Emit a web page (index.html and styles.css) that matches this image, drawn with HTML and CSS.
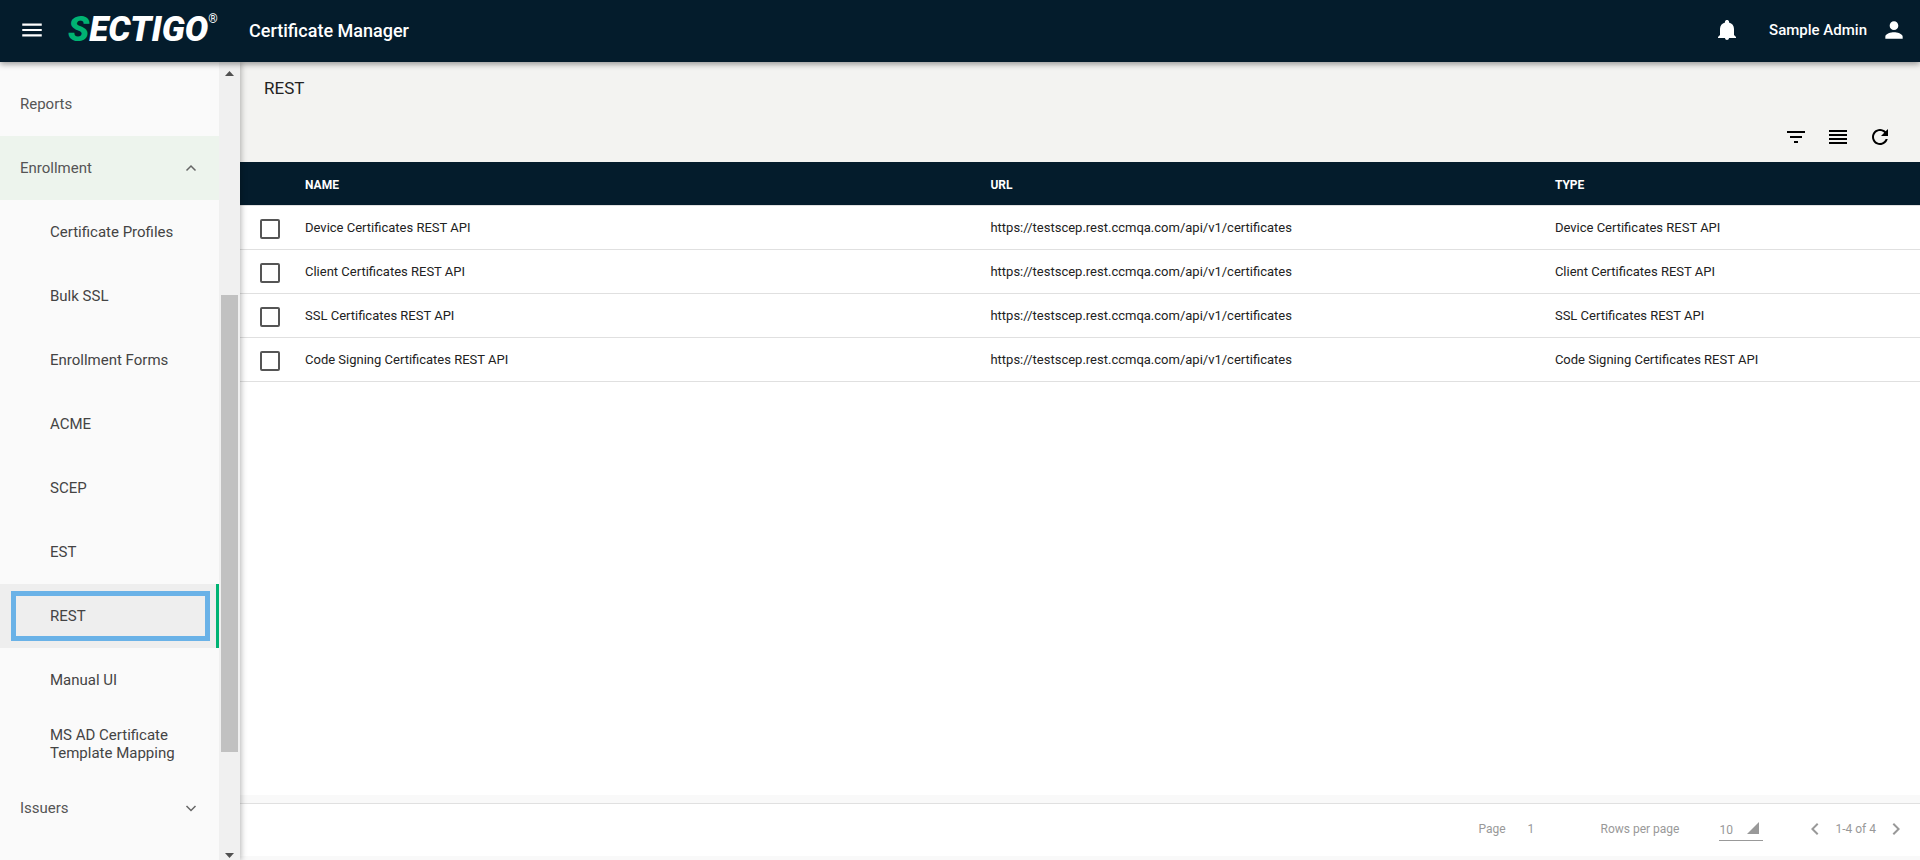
FILE: index.html
```html
<!DOCTYPE html>
<html lang="en">
<head>
    <meta charset="UTF-8">
    <meta name="viewport" content="width=device-width, initial-scale=1.0">
    <title>Certificate Manager</title>
    <link rel="stylesheet" href="styles.css">
</head>
<body>
    <header class="topbar">
        <button type="button" class="icon-btn menu-btn" aria-label="Menu">
            <svg width="26" height="26" viewBox="0 0 24 24"><path d="M3 18h18v-2H3v2zm0-5h18v-2H3v2zm0-7v2h18V6H3z"/></svg>
        </button>
        <a href="#" class="logo"><span class="logo-mark">S</span>ECTIGO<sup>&reg;</sup></a>
        <h1>Certificate Manager</h1>
        <div class="user">
            <button type="button" class="icon-btn" aria-label="Notifications">
                <svg width="24" height="24" viewBox="0 0 24 24"><path d="M12 22c1.100 0 2-.9 2-2h-4c0 1.100.9 2 2 2zm7-5v-6c0-3.300-1.800-5.800-5-6.600V3.500C14 2.700 13 2 12 2s-2 .7-2 1.500v.9C6.900 5.200 5 7.700 5 11v6l-2 2v1h18v-1l-2-2z"/></svg>
            </button>
            <span class="user-name">Sample Admin</span>
            <button type="button" class="icon-btn" aria-label="Account">
                <svg width="26" height="26" viewBox="0 0 24 24"><path d="M12 12c2.210 0 4-1.790 4-4s-1.790-4-4-4-4 1.790-4 4 1.790 4 4 4zm0 2c-2.670 0-8 1.340-8 4v2h16v-2c0-2.660-5.330-4-8-4z"/></svg>
            </button>
        </div>
    </header>

    <div class="layout">
        <aside class="sidebar">
            <nav class="nav">
                <a href="#">Reports</a>
                <a href="#" class="open">Enrollment
                    <svg width="12" height="12" viewBox="0 0 12 12"><path d="M1.500 8.500 6 4l4.500 4.500"/></svg>
                </a>
                <a href="#" class="sub">Certificate Profiles</a>
                <a href="#" class="sub">Bulk SSL</a>
                <a href="#" class="sub">Enrollment Forms</a>
                <a href="#" class="sub">ACME</a>
                <a href="#" class="sub">SCEP</a>
                <a href="#" class="sub">EST</a>
                <a href="#" class="sub active"><span>REST</span></a>
                <a href="#" class="sub">Manual UI</a>
                <a href="#" class="sub">MS AD Certificate Template Mapping</a>
                <a href="#">Issuers
                    <svg width="12" height="12" viewBox="0 0 12 12"><path d="M1.500 4 6 8.500 10.500 4"/></svg>
                </a>
            </nav>
            <div class="scrollbar" aria-hidden="true">
                <svg width="21" height="21" viewBox="0 0 21 21"><path d="M6 14l4.500-5 4.500 5z"/></svg>
                <div class="space-top"></div>
                <div class="thumb"></div>
                <div class="space-bottom"></div>
                <svg width="21" height="21" viewBox="0 0 21 21"><path d="M6 14l4.500 5 4.500-5z"/></svg>
            </div>
        </aside>

        <main class="content">
            <div class="page-head">
                <h2>REST</h2>
                <div class="tools">
                    <button type="button" class="icon-btn" aria-label="Filter">
                        <svg width="24" height="24" viewBox="0 0 24 24"><path d="M10 18h4v-2h-4v2zM3 6v2h18V6H3zm3 7h12v-2H6v2z"/></svg>
                    </button>
                    <button type="button" class="icon-btn" aria-label="Group">
                        <svg width="24" height="24" viewBox="0 0 24 24"><path d="M3 5h18v2H3zM3 9h18v2H3zM3 13h18v2H3zM3 17h18v2H3z"/></svg>
                    </button>
                    <button type="button" class="icon-btn" aria-label="Refresh">
                        <svg width="24" height="24" viewBox="0 0 24 24"><path d="M17.650 6.350C16.200 4.900 14.210 4 12 4c-4.420 0-7.990 3.580-7.990 8s3.570 8 7.990 8c3.730 0 6.840-2.550 7.730-6h-2.080c-.82 2.330-3.040 4-5.650 4-3.310 0-6-2.690-6-6s2.690-6 6-6c1.660 0 3.140.69 4.220 1.780L13 11h7V4l-2.350 2.350z"/></svg>
                    </button>
                </div>
            </div>

            <table class="grid">
                <colgroup>
                    <col class="col-check">
                    <col class="col-name">
                    <col class="col-url">
                    <col>
                </colgroup>
                <thead>
                    <tr><th></th><th>NAME</th><th>URL</th><th>TYPE</th></tr>
                </thead>
                <tbody>
                    <tr>
                        <td><input type="checkbox" aria-label="Select Device Certificates REST API"></td>
                        <td>Device Certificates REST API</td>
                        <td>https://testscep.rest.ccmqa.com/api/v1/certificates</td>
                        <td>Device Certificates REST API</td>
                    </tr>
                    <tr>
                        <td><input type="checkbox" aria-label="Select Client Certificates REST API"></td>
                        <td>Client Certificates REST API</td>
                        <td>https://testscep.rest.ccmqa.com/api/v1/certificates</td>
                        <td>Client Certificates REST API</td>
                    </tr>
                    <tr>
                        <td><input type="checkbox" aria-label="Select SSL Certificates REST API"></td>
                        <td>SSL Certificates REST API</td>
                        <td>https://testscep.rest.ccmqa.com/api/v1/certificates</td>
                        <td>SSL Certificates REST API</td>
                    </tr>
                    <tr>
                        <td><input type="checkbox" aria-label="Select Code Signing Certificates REST API"></td>
                        <td>Code Signing Certificates REST API</td>
                        <td>https://testscep.rest.ccmqa.com/api/v1/certificates</td>
                        <td>Code Signing Certificates REST API</td>
                    </tr>
                </tbody>
            </table>

            <footer class="pager">
                <label for="page">Page</label>
                <input type="text" id="page" value="1">
                <label for="rows">Rows per page</label>
                <div class="select">
                    <select id="rows">
                        <option>10</option>
                        <option>25</option>
                        <option>50</option>
                    </select>
                    <svg width="12" height="12" viewBox="0 0 12 12"><path d="M12 0v12H0z"/></svg>
                </div>
                <button type="button" class="icon-btn" aria-label="Previous page">
                    <svg width="24" height="24" viewBox="0 0 24 24"><path d="M15.410 7.410 14 6l-6 6 6 6 1.410-1.410L10.830 12z"/></svg>
                </button>
                <span class="range">1-4 of 4</span>
                <button type="button" class="icon-btn" aria-label="Next page">
                    <svg width="24" height="24" viewBox="0 0 24 24"><path d="M10 6 8.590 7.410 13.170 12l-4.580 4.590L10 18l6-6z"/></svg>
                </button>
            </footer>
        </main>
    </div>
</body>
</html>
```

FILE: styles.css
```css
* {
    box-sizing: border-box;
}

body {
    margin: 0;
    height: 100vh;
    display: flex;
    flex-direction: column;
    font-family: Roboto, sans-serif;
    color: #222;
    background-color: #fff;
}

a {
    color: inherit;
    text-decoration: none;
}

.icon-btn {
    display: flex;
    padding: 0;
    border: none;
    background: none;
    color: inherit;
    cursor: pointer;
}

.icon-btn svg {
    fill: currentColor;
}

/* Top bar */
.topbar {
    display: flex;
    align-items: center;
    flex: none;
    height: 62px;
    padding: 0 13px 2px 19px;
    background-color: #041c2c;
    color: #fff;
    box-shadow: 0 2px 6px rgba(0, 0, 0, 0.4);
    z-index: 2;
}

.topbar h1 {
    margin: 0;
    font-size: 18px;
    font-weight: 500;
}

.logo {
    display: flex;
    width: 181px;
    margin-left: 23px;
    font-family: Roboto, sans-serif;
    font-size: 35px;
    font-weight: 900;
    font-style: italic;
    line-height: 40px;
}

.logo-mark {
    color: #00b373;
}

.logo sup {
    font-size: 12px;
    font-style: normal;
    font-weight: normal;
    line-height: 18px;
}

.user {
    display: flex;
    align-items: center;
    margin-left: auto;
}

.user-name {
    margin: 0 14px 0 30px;
    font-size: 15px;
    font-weight: 500;
}

.layout {
    display: flex;
    flex: 1;
    min-height: 0;
}

/* Sidebar */
.sidebar {
    display: flex;
    flex: none;
    width: 240px;
    background-color: #fafafa;
    box-shadow: 1px 0 6px rgba(0, 0, 0, 0.3);
    z-index: 1;
}

.nav {
    flex: 1;
    padding-top: 10px;
    font-size: 15px;
    line-height: 18px;
    color: #555;
    overflow: hidden;
}

.nav a {
    display: flex;
    align-items: center;
    justify-content: space-between;
    height: 64px;
    padding: 0 22px 0 20px;
}

.nav svg {
    fill: none;
    stroke: #666;
    stroke-width: 1.5;
}

.nav .open {
    background-color: #edf4ed;
}

.nav .sub {
    padding: 0 40px 0 50px;
    color: #444;
}

.nav .active {
    padding: 7px 6px 7px 11px;
    background-color: #eee;
    border-right: 3px solid #00b373;
}

.nav .active span {
    display: flex;
    align-items: center;
    flex: 1;
    height: 50px;
    padding-left: 34px;
    border: 5px solid #6ab2e7;
}

.scrollbar {
    display: flex;
    flex-direction: column;
    width: 21px;
    background-color: #f0f0f0;
}

.scrollbar svg {
    flex: none;
    fill: #505050;
}

.space-top {
    flex: 212;
}

.thumb {
    flex: 457;
    margin: 0 2px;
    background-color: #c1c1c1;
}

.space-bottom {
    flex: 87;
}

/* Content */
.content {
    display: flex;
    flex-direction: column;
    flex: 1;
    min-width: 0;
}

.page-head {
    height: 100px;
    padding: 14px 28px 0 24px;
    background-color: #f3f3f1;
}

.page-head h2 {
    margin: 0;
    font-size: 17px;
    font-weight: 400;
    line-height: 24px;
}

.tools {
    display: flex;
    justify-content: flex-end;
    gap: 18px;
    margin-top: 25px;
    color: #000;
}

.grid {
    width: 100%;
    table-layout: fixed;
    border-collapse: collapse;
    font-size: 13px;
}

.col-check {
    width: 65px;
}

.col-name {
    width: 40.8%;
}

.col-url {
    width: 33.6%;
}

.grid th {
    height: 43px;
    padding: 3px 0 0;
    background-color: #041c2c;
    color: #fff;
    text-align: left;
    font-size: 12px;
    font-weight: 700;
}

.grid td {
    height: 44px;
    padding: 0;
    border-top: 1px solid #e0e0e0;
    border-bottom: 1px solid #e0e0e0;
}

.grid input {
    display: block;
    appearance: none;
    width: 20px;
    height: 20px;
    margin: 4px 0 0 20px;
    border: 2px solid #555;
    border-radius: 2px;
}

/* Pager */
.pager {
    display: flex;
    align-items: center;
    height: 65px;
    margin-top: auto;
    padding: 0 12px 2px 0;
    border-top: 8px solid #f9f9f9;
    border-bottom: 4px solid #f9f9f9;
    box-shadow: inset 0 1px 0 #e0e0e0;
    justify-content: flex-end;
    font-size: 12px;
    color: #999;
}

.pager input {
    width: 40px;
    margin: 0 33px 0 22px;
    padding: 0;
    border: none;
    background: none;
    font: inherit;
    color: inherit;
}

.select {
    display: flex;
    align-items: center;
    width: 44px;
    height: 20px;
    margin: 4px 40px 0;
    border-bottom: 1px solid #999;
}

.select select {
    appearance: none;
    width: 28px;
    padding: 0;
    border: none;
    background: none;
    font: inherit;
    color: inherit;
}

.select svg {
    flex: none;
    margin-bottom: 4px;
    fill: #999;
}

.range {
    margin: 0 8px;
}
```
